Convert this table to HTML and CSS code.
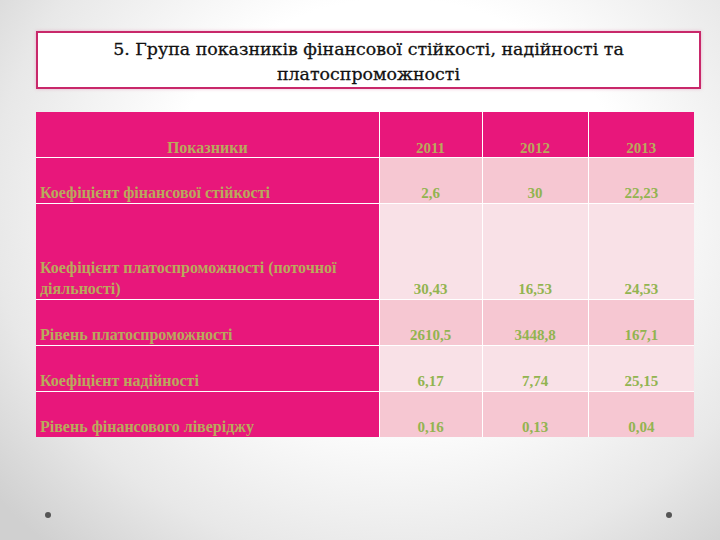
FILE: index.html
```html
<!DOCTYPE html>
<html lang="uk">
<head>
<meta charset="utf-8">
<title>Група показників фінансової стійкості</title>
<link rel="stylesheet" href="styles.css">
</head>
<body>
<div class="slide">
  <div class="title-box">
    <h1 class="title">5. Група показників фінансової стійкості, надійності та<br>платоспроможності</h1>
  </div>
  <table class="data">
    <colgroup>
      <col class="c-label"><col class="c-num"><col class="c-num2"><col class="c-num2">
    </colgroup>
    <tr class="r-head">
      <th class="head center">Показники</th>
      <th class="head center year">2011</th>
      <th class="head center year">2012</th>
      <th class="head center year">2013</th>
    </tr>
    <tr class="r-std">
      <th class="label">Коефіцієнт фінансової стійкості</th>
      <td class="dark">2,6</td><td class="dark">30</td><td class="dark">22,23</td>
    </tr>
    <tr class="r-tall">
      <th class="label">Коефіцієнт платоспроможності (поточної<br>діяльності)</th>
      <td class="light">30,43</td><td class="light">16,53</td><td class="light">24,53</td>
    </tr>
    <tr class="r-std">
      <th class="label">Рівень платоспроможності</th>
      <td class="dark">2610,5</td><td class="dark">3448,8</td><td class="dark">167,1</td>
    </tr>
    <tr class="r-std">
      <th class="label">Коефіцієнт надійності</th>
      <td class="light">6,17</td><td class="light">7,74</td><td class="light">25,15</td>
    </tr>
    <tr class="r-std">
      <th class="label">Рівень фінансового ліверіджу</th>
      <td class="dark">0,16</td><td class="dark">0,13</td><td class="dark">0,04</td>
    </tr>
  </table>
  <div class="footer">
    <span class="dot"></span>
    <span class="dot"></span>
  </div>
</div>
</body>
</html>
```
FILE: styles.css
```css
html, body {
  margin: 0;
  padding: 0;
}
body {
  width: 720px;
  height: 540px;
  overflow: hidden;
  background: radial-gradient(ellipse 72% 85% at 55% 38%, #ffffff 45%, #e8e8e8 78%, #d0d0d0 100%);
  font-family: "Liberation Serif", "Times New Roman", serif;
}
.slide {
  box-sizing: border-box;
  height: 540px;
  padding: 31px 19px 0 36px;
  display: flex;
  flex-direction: column;
}
.title-box {
  box-sizing: border-box;
  height: 58px;
  padding-top: 3px;
  border: 2px solid #c8286a;
  background: #ffffff;
  display: flex;
  align-items: center;
  justify-content: center;
  box-shadow: 0 0 3px rgba(232, 120, 170, 0.5);
}
.title {
  margin: 0;
  font-family: "DejaVu Serif", "Liberation Serif", serif;
  font-weight: normal;
  -webkit-text-stroke: 0.3px #111;
  font-size: 17.4px;
  line-height: 25px;
  color: #111;
  text-align: center;
}
.data {
  margin-top: 23px;
  width: 658px;
  border-collapse: collapse;
  table-layout: fixed;
  font-size: 15px;
}
.c-label { width: 343px; }
.c-num { width: 103px; }
.c-num2 { width: 106px; }
.data th, .data td {
  border: 1px solid #ffffff;
  padding: 0 4px 0 4px;
  vertical-align: bottom;
  line-height: 20px;
  font-weight: bold;
}
.data tr:first-child th { border-top: none; }
.data th:first-child { border-left: none; }
.data tr:last-child th, .data tr:last-child td { border-bottom: none; }
.data tr th:last-child, .data tr td:last-child { border-right: none; }
.r-head { height: 45px; }
.r-std { height: 46px; }
.r-tall { height: 96px; }
.r-tall .label { line-height: 21px; }
.head {
  background: #e8177b;
  color: #b8aa5c;
  font-size: 16px;
  line-height: 18px !important;
}
.head.year { font-size: 15px; }
.center { text-align: center; }
.label {
  background: #e8177b;
  color: #b8aa5c;
  text-align: left;
  padding-left: 5px;
  font-size: 16px;
}
.data td {
  text-align: center;
  color: #92b450;
}
.dark { background: #f6c7d2; }
.light { background: #f9e1e7; }
.footer {
  margin-top: auto;
  margin-bottom: 22px;
  display: flex;
  justify-content: space-between;
  padding: 0 29px 0 9px;
}
.dot {
  width: 6px;
  height: 6px;
  border-radius: 50%;
  background: #555555;
}
```
